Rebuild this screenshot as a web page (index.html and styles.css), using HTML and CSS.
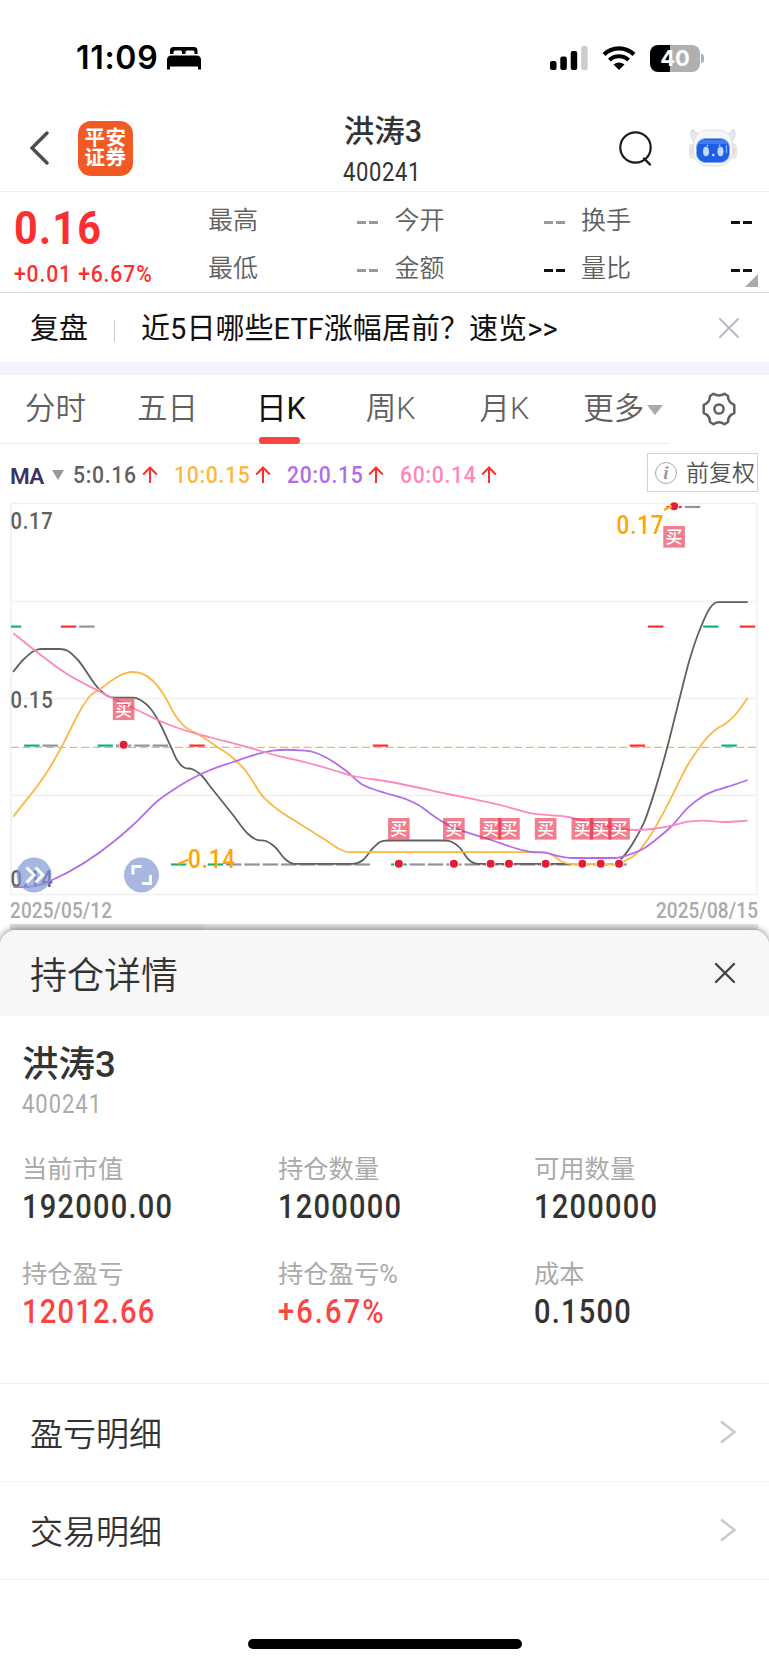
FILE: index.html
```html
<!DOCTYPE html>
<html lang="zh-CN">
<head>
    <meta charset="UTF-8">
    <meta name="viewport" content="width=device-width, initial-scale=1.0">
    <title>洪涛3 400241</title>
    <link rel="stylesheet" href="styles.css">
</head>
<body>
    <div class="status-bar">
        <div class="status-left">
            <span class="time">11:09</span>
            <svg class="bed" width="34" height="24" viewBox="0 0 34 24">
                <path d="M3 8V4.500Q3 1 6.500 1H27Q30.500 1 30.500 4.500V8H27.500V6Q27.500 4.500 26 4.500H20Q18.500 4.500 18.500 6V8H15V6Q15 4.500 13.500 4.500H8Q6.500 4.500 6.500 6V8Z"/>
                <path d="M0 23.500V14Q0 9.500 4.500 9.500H29.500Q34 9.500 34 14V23.500H31V20.500H3V23.500Z"/>
            </svg>
        </div>
        <div class="status-right">
            <svg width="38" height="24" viewBox="0 0 38 24">
                <rect x="0" y="15" width="6.500" height="9" rx="2"/>
                <rect x="10.300" y="10.500" width="6.500" height="13.500" rx="2"/>
                <rect x="20.700" y="5" width="6.500" height="19" rx="2"/>
                <rect x="31.200" y="0" width="6.500" height="24" rx="2" fill="#ccc"/>
            </svg>
            <svg class="wifi" width="34" height="24" viewBox="0 0 34 24">
                <path d="M2 8.500A21.500 21.500 0 0 1 32 8.500" fill="none" stroke="#000" stroke-width="4.200"/>
                <path d="M7.400 14A14 14 0 0 1 26.600 14" fill="none" stroke="#000" stroke-width="4"/>
                <path d="M11.500 18.500Q17 14.500 22.500 18.500L17 24Z"/>
            </svg>
            <div class="battery"><span>40</span></div>
        </div>
    </div>

    <div class="header">
        <div class="header-side">
            <svg class="back" width="20" height="36" viewBox="0 0 20 36"><path d="M18 3L3 18L18 33" fill="none" stroke="#4c4c4c" stroke-width="3.400" stroke-linecap="round"/></svg>
            <div class="logo"><span>平安</span><span>证券</span></div>
        </div>
        <div class="stock">
            <div class="stock-name">洪涛3</div>
            <div class="stock-code"><span class="num">400241</span></div>
        </div>
        <div class="header-side right">
            <svg class="search" width="34" height="36" viewBox="0 0 34 36"><circle cx="16.500" cy="16.500" r="15.200" fill="none" stroke="#1b1b1b" stroke-width="2.200"/><path d="M25 27.500L31 33.500" stroke="#1b1b1b" stroke-width="2.400" stroke-linecap="round"/></svg>
            <svg class="robot" width="48" height="40" viewBox="0 0 48 40">
                <path d="M5 14Q-1 4 4 1Q6 5 10 6L14 5ZM43 14Q49 4 44 1Q42 5 38 6L34 5Z" fill="#e3e8ec" stroke="#cfd4d9" stroke-width="0.800"/>
                <rect x="0.800" y="16" width="8" height="14" rx="3" fill="#edeff2" stroke="#cdd2d8" stroke-width="0.800"/>
                <rect x="39.200" y="16" width="8" height="14" rx="3" fill="#edeff2" stroke="#cdd2d8" stroke-width="0.800"/>
                <path d="M3 19V27M45 19V27" stroke="#f2c3b8" stroke-width="1"/>
                <rect x="4.500" y="2" width="39" height="36" rx="14" fill="#f5f7f9" stroke="#dcdfe4" stroke-width="1"/>
                <rect x="7.500" y="10.500" width="33" height="24" rx="9" fill="#205ee5" stroke="#86a7e9" stroke-width="1"/>
                <path d="M13 12H35Q38 13 38.500 16H9.500Q10 13 13 12Z" fill="#3f7cf2"/>
                <ellipse cx="17" cy="23.500" rx="3" ry="4.800" fill="#bcdcff"/>
                <ellipse cx="31.500" cy="23.500" rx="3" ry="4.800" fill="#bcdcff"/>
                <circle cx="24.300" cy="27" r="1.200" fill="#d6e8ff"/>
                <circle cx="18.500" cy="17.500" r="0.900" fill="#a7c8ff"/>
                <circle cx="30.500" cy="17.500" r="0.900" fill="#a7c8ff"/>
                <path d="M37.500 17V25" stroke="#8db7ff" stroke-width="1.200"/>
            </svg>
        </div>
    </div>

    <div class="quote">
        <div class="price">
            <div class="price-now"><span class="num">0.16</span></div>
            <div class="price-change"><span class="num">+0.01 +6.67%</span></div>
        </div>
        <div class="quote-grid">
            <div class="cell"><span>最高</span><b></b></div>
            <div class="cell"><span>今开</span><b></b></div>
            <div class="cell dark"><span>换手</span><b></b></div>
            <div class="cell"><span>最低</span><b></b></div>
            <div class="cell dark"><span>金额</span><b></b></div>
            <div class="cell dark"><span>量比</span><b></b></div>
        </div>
        <div class="corner"></div>
    </div>

    <div class="banner">
        <span>复盘</span>
        <i class="banner-line"></i>
        <span class="banner-text">近5日哪些ETF涨幅居前？速览&gt;&gt;</span>
        <svg width="22" height="22" viewBox="0 0 22 22"><path d="M2 2L20 20M20 2L2 20" stroke="#b9b9c8" stroke-width="2" stroke-linecap="round"/></svg>
    </div>

    <div class="tabs">
        <div class="tab-list">
            <div class="tab">分时</div>
            <div class="tab">五日</div>
            <div class="tab active">日K</div>
            <div class="tab">周K</div>
            <div class="tab">月K</div>
            <div class="tab more">更多<i></i></div>
        </div>
        <svg class="gear" width="34" height="34" viewBox="0 0 34 34" fill="none" stroke="#606060" stroke-width="2.500" stroke-linejoin="round">
            <path d="M11.500 1.800Q17 5 22.500 1.800L26 4Q26 10.500 32.300 13V21Q26 23.500 26 30L22.500 32.200Q17 28.500 11.500 32.200L8 30Q8 23.500 1.700 21V13Q8 10.500 8 4Z"/>
            <circle cx="17" cy="17" r="4.600"/>
        </svg>
    </div>

    <div class="ma-row">
        <span class="ma-name">MA</span><i class="ma-caret"></i>
        <span class="ma ma5"><span class="num">5:0.16</span><svg class="up" viewBox="0 0 16 18"><path d="M8 17V2M1.200 8.500L8 1.500L14.800 8.500"/></svg></span>
        <span class="ma ma10"><span class="num">10:0.15</span><svg class="up" viewBox="0 0 16 18"><path d="M8 17V2M1.200 8.500L8 1.500L14.800 8.500"/></svg></span>
        <span class="ma ma20"><span class="num">20:0.15</span><svg class="up" viewBox="0 0 16 18"><path d="M8 17V2M1.200 8.500L8 1.500L14.800 8.500"/></svg></span>
        <span class="ma ma60"><span class="num">60:0.14</span><svg class="up" viewBox="0 0 16 18"><path d="M8 17V2M1.200 8.500L8 1.500L14.800 8.500"/></svg></span>
        <div class="adjust"><span class="info">i</span><span class="adjust-text">前复权</span></div>
    </div>

    <svg id="chart" class="chart" width="769" height="397" viewBox="0 501 769 397">
        <g class="grid">
            <rect x="11" y="503.500" width="746" height="391"/>
            <path d="M11 601.500H757M11 698.500H757M11 795.500H757"/>
        </g>
        <path class="cost" d="M11 747.300H757"/>
        <text class="axis" x="10.500" y="529" textLength="43" lengthAdjust="spacingAndGlyphs">0.17</text>
        <text class="axis" x="10.500" y="708" textLength="43" lengthAdjust="spacingAndGlyphs">0.15</text>
        <text class="axis" x="10.500" y="887" textLength="43" lengthAdjust="spacingAndGlyphs">0.14</text>
        <g id="candles"></g>
        <g id="lines"></g>
        <g id="buys"></g>
        <path class="lead" d="M178 864L188.500 859.500M664 510L672 506"/>
        <text class="peak" x="188" y="867.500" textLength="48" lengthAdjust="spacingAndGlyphs">0.14</text>
        <text class="peak" x="616.500" y="533.500" textLength="48" lengthAdjust="spacingAndGlyphs">0.17</text>
        <g class="round-btn">
            <circle cx="34" cy="875" r="17.500"/>
            <path d="M26.500 867.500L34 875L26.500 882.500M35.500 867.500L43 875L35.500 882.500"/>
            <circle cx="141.500" cy="875" r="17.500"/>
            <path d="M133 874.500V866.500H141.500M150.500 875V883.500H142"/>
        </g>
    </svg>
    <div class="dates"><span class="num">2025/05/12</span><span class="num">2025/08/15</span></div>
    <div class="volume-edge"></div>

    <div class="sheet">
        <div class="sheet-head">
            <span>持仓详情</span>
            <svg width="22" height="22" viewBox="0 0 22 22"><path d="M2 2L20 20M20 2L2 20" stroke="#444" stroke-width="2.400" stroke-linecap="round"/></svg>
        </div>
        <div class="holding">
            <div class="holding-name">洪涛3</div>
            <div class="holding-code"><span class="num">400241</span></div>
            <div class="stats">
                <div class="stat"><p>当前市值</p><b class="num">192000.00</b></div>
                <div class="stat"><p>持仓数量</p><b class="num">1200000</b></div>
                <div class="stat"><p>可用数量</p><b class="num">1200000</b></div>
                <div class="stat red"><p>持仓盈亏</p><b class="num">12012.66</b></div>
                <div class="stat red"><p>持仓盈亏%</p><b class="num percent">+6.67%</b></div>
                <div class="stat"><p>成本</p><b class="num">0.1500</b></div>
            </div>
        </div>
        <div class="link-row"><span>盈亏明细</span><svg width="18" height="24" viewBox="0 0 18 24"><path d="M2 1.500L15.500 12L2 22.500"/></svg></div>
        <div class="link-row"><span>交易明细</span><svg width="18" height="24" viewBox="0 0 18 24"><path d="M2 1.500L15.500 12L2 22.500"/></svg></div>
        <div class="home-bar"></div>
    </div>

    <script src="chart.js"></script>
</body>
</html>
```
FILE: styles.css
```css
body {
    margin: 0;
    height: 1665px;
    overflow: hidden;
    background: #fff;
    color: #333;
    font-family: Roboto, "Noto Sans CJK SC", sans-serif;
}
svg {
    display: block;
    flex-shrink: 0;
}
/* narrow figures */
.num {
    display: inline-block;
    transform: scaleX(0.88);
    transform-origin: 0 50%;
    white-space: nowrap;
}
/* status bar */
.status-bar {
    display: flex;
    justify-content: space-between;
    height: 105px;
    padding: 0 64px 0 76px;
    box-sizing: border-box;
}
.status-left, .status-right {
    display: flex;
    align-items: center;
    height: 116px;
}
.time {
    font: 600 32px/40px Inter, sans-serif;
    letter-spacing: 0.700px;
    color: #000;
}
.bed {
    margin-left: 9px;
}
.wifi {
    margin: 0 14px 0 14px;
}
.battery {
    position: relative;
    width: 50px;
    height: 27px;
    margin-right: 5px;
    border-radius: 8px;
    background: linear-gradient(90deg, #000 40%, #b0b0b0 40%);
    color: #fff;
    font: 700 22px/27px Inter, sans-serif;
    text-align: center;
}
.battery::after {
    content: "";
    position: absolute;
    right: -4px;
    top: 9px;
    width: 3px;
    height: 9px;
    border-radius: 0 4px 4px 0;
    background: #b0b0b0;
}
/* header */
.header {
    display: flex;
    justify-content: space-between;
    height: 87px;
    padding: 0 32px 0 29px;
    box-sizing: border-box;
    border-bottom: 1px solid #eee;
}
.header-side {
    display: flex;
    align-items: center;
    width: 240px;
}
.header-side.right {
    justify-content: flex-end;
}
.search {
    margin-top: 2px;
}
.logo {
    display: flex;
    flex-direction: column;
    align-items: center;
    justify-content: center;
    width: 55px;
    height: 55px;
    margin-left: 29px;
    border-radius: 13px;
    background: #f15a24;
    color: #fff;
    font-size: 20.500px;
    line-height: 20px;
    font-weight: 700;
    letter-spacing: 0.500px;
}
.robot {
    margin-left: 36px;
    margin-top: -1px;
}
.stock {
    text-align: center;
}
.stock-name {
    margin-top: 7px;
    font-size: 30.5px;
    line-height: 40px;
    font-weight: 500;
}
.stock-code {
    padding-left: 9px;
    font-size: 25px;
    line-height: 42px;
    letter-spacing: 0.7px;
}
/* quote */
.quote {
    position: relative;
    display: flex;
    height: 101px;
    box-sizing: border-box;
    border-bottom: 1px solid #dcdce4;
}
.price {
    width: 194px;
    padding-left: 14px;
    color: #fb2f2f;
}
.price-now {
    margin-top: 11px;
    font-size: 47px;
    line-height: 50px;
    font-weight: 700;
    letter-spacing: 1.4px;
}
.price-change {
    margin-top: 6px;
    font-size: 24px;
    line-height: 30px;
    font-weight: 500;
    letter-spacing: 1px;
    white-space: nowrap;
}
.quote-grid {
    flex: 1;
    display: grid;
    grid-template-columns: 170px 170px 171px;
    grid-template-rows: 48px 48px;
    column-gap: 16.500px;
    padding: 5px 0 0 0;
}
.cell {
    display: flex;
    justify-content: space-between;
    align-items: center;
    font-size: 25px;
    line-height: 36px;
    color: #606060;
    font-weight: 350;
}
.cell b {
    width: 21px;
    height: 3px;
    margin-top: 2px;
    background: linear-gradient(90deg, #9999a6 9px, transparent 9px, transparent 12px, #9999a6 12px);
}
.dark b {
    background: linear-gradient(90deg, #111 9px, transparent 9px, transparent 12px, #111 12px);
}
.corner {
    position: absolute;
    right: 11px;
    bottom: 5px;
    border-left: 13px solid transparent;
    border-bottom: 13px solid #aaa;
}
/* banner */
.banner {
    display: flex;
    align-items: center;
    height: 67px;
    padding: 2px 29px 0 30px;
    border-bottom: 13px solid #f2f4f9;
    font-size: 29px;
    line-height: 40px;
    color: #111;
    font-weight: 400;
}
.banner-line {
    width: 1px;
    height: 22px;
    margin: 4px 26px 0 26px;
    background: #ccc;
}
.banner-text {
    flex: 1;
    letter-spacing: 0.050px;
}
.banner svg {
    margin-top: -2px;
}
/* period tabs */
.tabs {
    display: flex;
    height: 69px;
    align-items: center;
    justify-content: space-between;
    padding-right: 33px;
}
.tab-list {
    display: flex;
    gap: 52px;
    width: 645px;
    height: 68px;
    padding-left: 25px;
    border-bottom: 1px solid #eaeaea;
}
.tab {
    position: relative;
    font-size: 30.500px;
    line-height: 68px;
    color: #606060;
    font-weight: 350;
    white-space: nowrap;
}
.tab:nth-child(1) {
    margin-right: -1px;
}
.tab:nth-child(2) {
    margin-right: 6px;
}
.tab:nth-child(3) {
    margin-right: 8px;
}
.tab:nth-child(4) {
    margin-right: 12px;
}
.tab:nth-child(5) {
    margin-right: 2px;
}
.tab.active {
    color: #111;
    font-weight: 400;
}
.tab.active::after {
    content: "";
    position: absolute;
    left: 3px;
    bottom: -1px;
    width: 41px;
    height: 7px;
    border-radius: 3px;
    background: #f94545;
}
.tab.more {
    display: flex;
    align-items: center;
}
.tab.more i {
    margin: 2px 0 0 3px;
    border: 8px solid transparent;
    border-top: 10px solid #aaa;
    border-bottom: 0;
}
.gear {
    margin-top: -1px;
}
/* moving averages */
.ma-row {
    display: flex;
    align-items: center;
    height: 57px;
    padding: 0 11px 0 10px;
    font-size: 24px;
    line-height: 30px;
}
.ma-name {
    width: 42px;
    padding-top: 6px;
    color: #3a3268;
    font-size: 22.500px;
    font-weight: 600;
    letter-spacing: -0.7px;
}
.ma-caret {
    margin: 4px 9px 0 0;
    border: 6px solid transparent;
    border-top: 10px solid #999;
    border-bottom: 0;
}
.ma {
    display: flex;
    align-items: center;
    padding-top: 5px;
    font-weight: 500;
    letter-spacing: 0.8px;
    width: 113.500px;
}
.ma .num {
    width: 75px;
}
.ma5 {
    width: 101px;
    color: #606060;
}
.ma5 .num {
    width: 63px;
}
.ma10 { color: #fcb745; width: 112.500px; }
.ma20 { color: #b26ee8; }
.ma60 { color: #fd87c0; }
.up {
    width: 16px;
    height: 18px;
    margin-left: 6px;
    fill: none;
    stroke: #fb2f2f;
    stroke-width: 2;
}
.adjust {
    display: flex;
    align-items: center;
    justify-content: space-between;
    width: 100px;
    height: 37px;
    margin-left: auto;
    padding: 0 2px 0 7px;
    border: 1px solid #d2d2d2;
    font-size: 23px;
    color: #555;
    font-weight: 350;
    white-space: nowrap;
}
.adjust-text {
    padding-top: 3px;
}
.info {
    width: 20px;
    height: 20px;
    border: 1px solid #aaa;
    border-radius: 50%;
    font: italic 700 19px/20px "Liberation Serif", serif;
    text-align: center;
    color: #999;
}
/* chart */
.grid rect, .grid path {
    fill: none;
    stroke: #f0f0f0;
    stroke-width: 1.5;
}
.cost {
    stroke: #fcb260;
    stroke-width: 1.3;
    stroke-dasharray: 8 3.7;
}
.axis {
    font-size: 24px;
    font-weight: 500;
    letter-spacing: 0.9px;
    fill: #606060;
}
.peak {
    font-size: 26px;
    font-weight: 500;
    letter-spacing: 1px;
    fill: #ffa500;
}
.lead {
    stroke: #ffa500;
    stroke-width: 2;
}
.line {
    fill: none;
    stroke-width: 1.8;
}
.buy-text {
    font-size: 17px;
    font-weight: 500;
    fill: #fff;
    text-anchor: middle;
}
.round-btn circle {
    fill: #7d95d0;
    fill-opacity: 0.68;
}
.round-btn path {
    fill: none;
    stroke: #fff;
    stroke-width: 3;
}
.dates {
    display: flex;
    justify-content: space-between;
    height: 26px;
    padding: 0 11px 0 10px;
    font-size: 21.500px;
    line-height: 25px;
    font-weight: 500;
    letter-spacing: 0.15px;
    color: #aaa;
}
.dates .num:last-child {
    transform-origin: 100% 50%;
}
.volume-edge {
    height: 6px;
    margin: 0 11px 0 10px;
    background: linear-gradient(90deg, #dedede 194px, #e6e6e6 194px);
}
/* holding sheet */
.sheet {
    position: relative;
    height: 735px;
    border-radius: 16px 16px 0 0;
    background: #fff;
    box-shadow: 0 -1px 7px rgba(0, 0, 0, 0.45);
}
.sheet-head {
    display: flex;
    justify-content: space-between;
    align-items: center;
    height: 86px;
    padding: 0 33px 0 30px;
    border-radius: 16px 16px 0 0;
    background: #f7f7f7;
    font-size: 37px;
    font-weight: 350;
}
.holding {
    height: 368px;
    padding: 25px 0 0 22px;
    box-sizing: border-box;
    border-bottom: 1px solid #f2f2f2;
}
.holding-name {
    font-size: 36.500px;
    line-height: 48px;
    font-weight: 500;
}
.holding-code {
    font-size: 25px;
    line-height: 31px;
    letter-spacing: 1.100px;
    color: #aaa;
}
.stats {
    display: grid;
    grid-template-columns: 256px 256px 1fr;
    grid-template-rows: 105px 105px;
    margin-top: 31px;
}
.stat p {
    margin: 0;
    font-size: 25.300px;
    line-height: 38px;
    color: #aaa;
}
.stat b {
    display: block;
    font-size: 33px;
    line-height: 36px;
    font-weight: 500;
    letter-spacing: 1.4px;
}
.stat.red b {
    color: #fb4444;
}
.stat .percent {
    letter-spacing: 2.400px;
}
.link-row {
    display: flex;
    align-items: center;
    justify-content: space-between;
    height: 97px;
    padding: 0 32px 0 30px;
    border-bottom: 1px solid #f2f2f2;
    font-size: 33px;
    font-weight: 350;
}
.link-row span {
    padding-bottom: 2px;
}
.link-row svg {
    margin-bottom: 2px;
}
.link-row path {
    fill: none;
    stroke: #c7c7cd;
    stroke-width: 2.4;
}
.home-bar {
    width: 274px;
    height: 10px;
    margin: 59px auto 0;
    border-radius: 5px;
    background: #000;
}
```
FILE: chart.js
```js
const NS = 'http://www.w3.org/2000/svg';
const STEP = 18.35;
const X0 = 13.5;

// y of each price level
const ROW = { top: 507, high: 626.6, mid: 745.6, low: 864.5 };

const candles = {
    '#0fb573': { high: [0, 38], mid: [1, 5, 39], low: [9, 11, 21] },
    '#fb2f2f': { top: [36], high: [3, 35, 40], mid: [10, 20, 34] },
    '#9393a0': { top: [37], high: [4], mid: [2, 6, 7, 8],
        low: [12, 13, 14, 15, 16, 17, 18, 19, 22, 23, 24, 25, 26, 27, 28, 29, 30, 31, 32, 33] }
};

const lines = {
    '#606060': [[13,672],[23,660],[35,650.5],[41,649],[60,649],[68,651],[77,659],[99,689],[107,695.7],[115,697.7],[133,697.7],[142,701],[150,708],[158,720],[171,747],[177,760],[184,767.5],[192,769],[200,774],[213,790],[233,815],[247,833],[256,839.5],[266,841],[275,847],[285,859],[294,863.8],[353,863.8],[363,860],[373,848],[380,842],[388,840.5],[445,840.5],[452,842],[460,848],[468,859],[478,863.8],[614,863.8],[622,858],[633,843],[645,820],[655.7,788],[667.7,745.7],[680,696.7],[689,661.7],[701.7,625],[710,608],[718,602.2],[747.7,602.2]],
    '#fcb745': [[13.3,816.7],[48.3,770],[61.7,746.7],[81.7,708],[90,696],[100,689],[116.7,677.3],[125,673.3],[133,672],[142,673.7],[153,681],[165,696.7],[175,715],[183,725],[200,735.3],[217,746.7],[233,758],[245,770],[263,796.7],[277,809],[300,824],[327,841],[340,849.3],[349,852.2],[385,852.2],[543,852.2],[552,855],[562,861.7],[572,864],[615,864],[625,861],[635,855],[645,843.3],[655.7,826.7],[671.7,796.7],[686.7,766.7],[700,746.7],[708,736.7],[718,728],[725,724],[735,715],[747.7,698]],
    '#b26ee8': [[13.3,887.2],[27,887],[40,885],[50,881],[117,839],[133,825],[160,799],[173,790],[197,776],[209,770.5],[233,762],[263,752.7],[273,750.7],[300,750.3],[313,752],[327,758],[345,770],[363,785],[373,789],[385,793],[408,800],[418,804.7],[435,817],[447,824.3],[462,830.7],[488,839],[525,850.7],[532,852],[545,852.7],[558,856],[572,858],[615,858],[628,855],[645,847.7],[658,838],[671.7,826],[688,807.7],[701.7,797],[715,790.7],[728,786.7],[747.7,780]],
    '#fd87c0': [[13.3,633.3],[33,649],[67,674],[100,691.7],[133,708],[167,724],[187,731],[213,738],[247,747],[277,755.7],[303,761.7],[333,770],[353,776],[385,781],[448,794],[508,807],[528,812.7],[568,817],[592,822.7],[615,828],[635,830],[652,829],[672,825.7],[688,821.7],[702,820.7],[725,822],[747.7,820.7]]
};

// [candle index, level, badge top]
const buys = [[6, 'mid', 698.5], [36, 'top', 526], [21, 'low', 818], [24, 'low', 818], [26, 'low', 818],
    [27, 'low', 818], [29, 'low', 818], [31, 'low', 818], [32, 'low', 818], [33, 'low', 818]];

function add(parent, name, attrs) {
    const el = document.createElementNS(NS, name);
    for (const key in attrs) el.setAttribute(key, attrs[key]);
    document.getElementById(parent).appendChild(el);
    return el;
}

function slope(p, i) {
    const s = (a, b) => (b[1] - a[1]) / (b[0] - a[0]);
    if (i === 0) return s(p[0], p[1]);
    if (i === p.length - 1) return s(p[i - 1], p[i]);
    const l = s(p[i - 1], p[i]), r = s(p[i], p[i + 1]);
    if (l === 0 || r === 0) return 0;
    const hl = p[i][0] - p[i - 1][0], hr = p[i + 1][0] - p[i][0];
    return (l * hr + r * hl) / (hl + hr);
}

function smooth(p) {
    let d = `M${p[0]}`;
    for (let i = 0; i < p.length - 1; i++) {
        const h = (p[i + 1][0] - p[i][0]) / 3;
        d += `C${p[i][0] + h},${p[i][1] + h * slope(p, i)} ${p[i + 1][0] - h},${p[i + 1][1] - h * slope(p, i + 1)} ${p[i + 1]}`;
    }
    return d;
}

for (const color in candles) {
    for (const row in candles[color]) {
        candles[color][row].forEach(i => {
            const x = X0 + STEP * i;
            const left = Math.max(x - 7.7, 11);
            add('candles', 'path', { d: `M${left} ${ROW[row]}H${x + 7.7}`, stroke: color, 'stroke-width': 2.2 });
        });
    }
}

for (const color in lines) {
    add('lines', 'path', { d: smooth(lines[color]), stroke: color, class: 'line' });
}

buys.forEach(([i, row, top]) => {
    const x = X0 + STEP * i;
    add('buys', 'circle', { cx: x, cy: ROW[row] - 0.8, r: 4.8, fill: '#fff' });
    add('buys', 'circle', { cx: x, cy: ROW[row] - 0.8, r: 4, fill: '#e21d38' });
    add('buys', 'rect', { x: x - 10.8, y: top, width: 21.6, height: 21.6, fill: '#e62843', 'fill-opacity': 0.6 });
    add('buys', 'text', { x: x, y: top + 17, class: 'buy-text' }).textContent = '买';
});
```
